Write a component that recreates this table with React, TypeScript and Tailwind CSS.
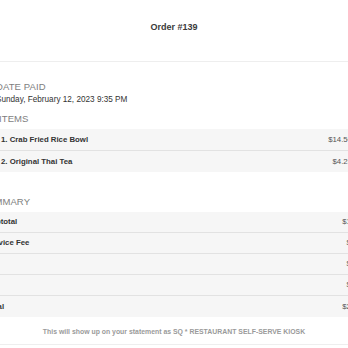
import React from "react";

const items = [
  { name: "1. Crab Fried Rice Bowl", price: "$14.50" },
  { name: "2. Original Thai Tea", price: "$4.25" },
];

const summary = [
  { label: "Subtotal", value: "$18.75" },
  { label: "Service Fee", value: "$0.99" },
  { label: "Tax", value: "$1.69" },
  { label: "Tip", value: "$0.00" },
  { label: "Total", value: "$21.43" },
];

export default function App() {
  return (
    <div className="w-[348px] h-[348px] overflow-hidden bg-white font-['Liberation_Sans',Arial,sans-serif] text-[#333333]">
      <div className="h-[62px] border-b border-[#eeeeee] flex items-center justify-center pb-[7px]">
        <span className="text-[9px] font-bold leading-none text-[#3a3a3a]">Order #139</span>
      </div>
      <div className="-mx-[24px] flex flex-col">
        <div className="mt-[19px] h-[12px] leading-[12px] pl-[20px] text-[9.5px] text-[#7e7e7e] tracking-[0.1px]">
          DATE PAID
        </div>
        <div className="mt-[2px] h-[10px] leading-[10px] pl-[20px] text-[8.2px] text-[#333333]">
          Sunday, February 12, 2023 9:35 PM
        </div>
        <div className="mt-[8px] h-[12px] leading-[12px] pl-[23px] text-[9.5px] text-[#7e7e7e] tracking-[0.1px]">
          ITEMS
        </div>
        <div className="mt-[4px] flex flex-col">
          {items.map((it, i) => (
            <div
              key={it.name}
              className={
                "flex items-center justify-between bg-[#f6f6f6] pl-[25px] pr-[20px] " +
                (i === 0 ? "h-[22px] border-b border-[#e2e2e2]" : "h-[21px]")
              }
            >
              <span className="text-[7.8px] font-bold leading-none text-[#333333]">{it.name}</span>
              <span className="text-[7.8px] leading-none text-[#555555]">{it.price}</span>
            </div>
          ))}
        </div>
        <div className="mt-[24px] h-[12px] leading-[12px] pl-[5px] text-[9.5px] text-[#7e7e7e] tracking-[0.1px]">
          SUMMARY
        </div>
        <div className="mt-[4px] flex flex-col">
          {summary.map((s, i) => (
            <div
              key={s.label}
              className={
                "h-[21px] flex items-center justify-between bg-[#f6f6f6] pl-[10px] pr-[6px] " +
                (i < summary.length - 1 ? "border-b border-[#e2e2e2]" : "")
              }
            >
              <span className="text-[7.8px] font-bold leading-none text-[#333333]">{s.label}</span>
              <span className="text-[7.8px] leading-none text-[#555555]">{s.value}</span>
            </div>
          ))}
        </div>
      </div>
      <div className="mt-[10px] h-[10px] leading-[10px] text-center text-[6.9px] font-bold text-[#9a9a9a]">
        This will show up on your statement as SQ * RESTAURANT SELF-SERVE KIOSK
      </div>
      <div className="mt-[7px] border-t border-[#eeeeee]" />
    </div>
  );
}
